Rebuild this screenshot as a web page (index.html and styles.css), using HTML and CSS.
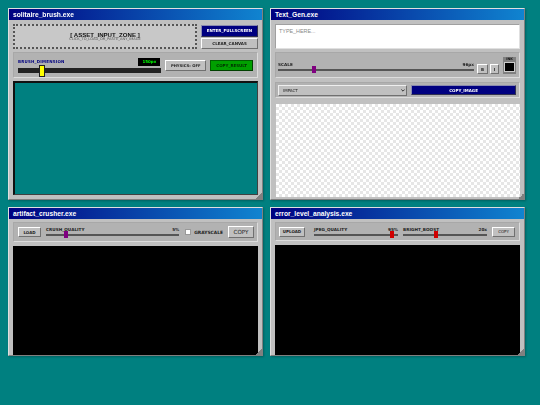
FILE: index.html
```html
<!DOCTYPE html>
<html lang="en">
<head>
<meta charset="utf-8">
<title>Desktop</title>
<link rel="stylesheet" href="styles.css">
</head>
<body>
<main class="desktop">
  <section class="window">
    <header class="titlebar">solitaire_brush.exe</header>
    <div class="body">
      <div class="top-row">
        <div class="dropzone">
          <div class="dz-title">[ ASSET_INPUT_ZONE ]</div>
          <div class="dz-sub">CLICK_TO_LOAD_OR_PASTE_ANY_IMAGE</div>
        </div>
        <div class="side-btns">
          <button class="btn navy wide">ENTER_FULLSCREEN</button>
          <button class="btn wide">CLEAR_CANVAS</button>
        </div>
      </div>
      <div class="panel brush-panel">
        <div class="brush-slider">
          <div class="brush-head">
            <span class="brush-label">BRUSH_DIMENSION</span>
            <span class="lcd">150px</span>
          </div>
          <div class="fat-track"><span class="yellow-thumb"></span></div>
        </div>
        <button class="btn physics">PHYSICS: OFF</button>
        <button class="btn green">COPY_RESULT</button>
      </div>
      <div class="canvas teal"></div>
    </div>
    <span class="grip"></span>
  </section>

  <section class="window">
    <header class="titlebar">Text_Gen.exe</header>
    <div class="body">
      <textarea class="text-in" placeholder="TYPE_HERE..."></textarea>
      <div class="panel scale-panel">
        <div class="scale-main">
          <div class="row-head"><span>SCALE</span><span>96px</span></div>
          <div class="thin-track"><span class="thumb purple scale-thumb"></span></div>
        </div>
        <button class="btn mini">B</button>
        <button class="btn mini narrow">I</button>
        <div class="ink"><span class="ink-label">INK</span><span class="ink-swatch"></span></div>
      </div>
      <div class="panel font-panel">
        <div class="select-wrap">
          <select class="font-select"><option>IMPACT</option></select>
          <svg class="chevron" viewBox="0 0 6 4" aria-hidden="true"><path d="M0.5 0.5 L3 3 L5.5 0.5" fill="none" stroke="#111" stroke-width="1.2"/></svg>
        </div>
        <button class="btn navy copy-image">COPY_IMAGE</button>
      </div>
      <div class="canvas checker"></div>
    </div>
    <span class="grip"></span>
  </section>

  <section class="window low">
    <header class="titlebar">artifact_crusher.exe</header>
    <div class="body">
      <div class="panel tool-panel">
        <button class="btn load">LOAD</button>
        <div class="grow">
          <div class="row-head"><span>CRUSH_QUALITY</span><span>5%</span></div>
          <div class="thin-track"><span class="thumb purple crush-thumb"></span></div>
        </div>
        <label class="gray-label"><span class="check"></span>GRAYSCALE</label>
        <button class="btn copy">COPY</button>
      </div>
      <div class="canvas black"></div>
    </div>
    <span class="grip"></span>
  </section>

  <section class="window low">
    <header class="titlebar">error_level_analysis.exe</header>
    <div class="body">
      <div class="panel tool-panel ela">
        <button class="btn load">UPLOAD</button>
        <div class="grow first">
          <div class="row-head"><span>JPEG_QUALITY</span><span>95%</span></div>
          <div class="thin-track"><span class="thumb red jpeg-thumb"></span></div>
        </div>
        <div class="grow">
          <div class="row-head"><span>BRIGHT_BOOST</span><span>20x</span></div>
          <div class="thin-track"><span class="thumb red boost-thumb"></span></div>
        </div>
        <button class="btn copy">COPY</button>
      </div>
      <div class="canvas black"></div>
    </div>
    <span class="grip"></span>
  </section>
</main>
</body>
</html>
```
FILE: styles.css
```css
* { box-sizing: border-box; }
html, body { margin: 0; height: 100%; }
body {
  background: #008080;
  font-family: "Liberation Sans", Arial, sans-serif;
  overflow: hidden;
}
.desktop {
  display: grid;
  grid-template-columns: 255px 255px;
  grid-template-rows: 192px 149px;
  gap: 7px;
  padding: 8px;
  filter: blur(0.3px);
}
.window {
  position: relative;
  display: flex;
  flex-direction: column;
  background: #c0c0c0;
  border: 1px solid;
  border-color: #dfdfdf #808080 #808080 #dfdfdf;
  box-shadow: 1px 1px 2px rgba(0, 0, 0, 0.25);
  overflow: hidden;
}
.titlebar {
  height: 11px;
  flex: none;
  padding-left: 4px;
  font-family: "Liberation Sans", sans-serif;
  font-size: 6.7px;
  font-weight: 700;
  line-height: 11px;
  color: #fff;
  background: linear-gradient(90deg, #000080, #1084d0);
}
.body {
  flex: 1;
  min-height: 0;
  display: flex;
  flex-direction: column;
  gap: 3px;
  padding: 4px 4px 0 4px;
}
.low .body { padding-top: 3px; gap: 4px; }
.btn {
  margin: 0;
  padding: 0;
  font-family: "DejaVu Sans", sans-serif;
  font-size: 4px;
  font-weight: 700;
  color: #222;
  background: #c0c0c0;
  border: 1px solid;
  border-color: #fff #707070 #707070 #fff;
  white-space: nowrap;
}
.btn.navy { background: #000080; color: #fff; border-color: #8a8ab0 #303050 #303050 #8a8ab0; }
.btn.green { background: #00a000; color: #003000; border-color: #006000 #004000 #004000 #006000; }
.top-row { display: flex; gap: 4px; height: 25px; flex: none; }
.dropzone {
  width: 184px;
  border: 2px dotted #555;
  background: #c8c8c8;
  display: flex;
  flex-direction: column;
  align-items: center;
  justify-content: center;
}
.dz-title { font-family: "Liberation Sans", sans-serif; font-size: 6.1px; font-weight: 700; line-height: 5px; color: #111; }
.dz-sub { font-family: "DejaVu Sans", sans-serif; font-size: 3.6px; line-height: 4px; color: #555; }
.side-btns { flex: 1; display: flex; flex-direction: column; gap: 1px; padding-top: 1px; }
.side-btns .wide { flex: 1; }
.panel {
  flex: none;
  background: #b2b2b2;
  border: 1px solid;
  border-color: #a8a8a8 #dcdcdc #dcdcdc #a8a8a8;
}
.brush-panel { height: 26px; display: flex; align-items: center; gap: 4px; padding: 0 4px; }
.brush-slider { width: 144px; display: flex; flex-direction: column; gap: 2px; margin-top: 1px; }
.brush-head { display: flex; justify-content: space-between; align-items: center; padding-right: 1px; }
.brush-label { font-family: "DejaVu Sans", sans-serif; font-size: 4px; font-weight: 700; color: #000080; letter-spacing: .2px; }
.lcd { width: 22px; height: 8px; background: #000; color: #0f0; font-family: "DejaVu Sans", sans-serif; font-size: 4px; font-weight: 700; line-height: 8px; text-align: center; }
.fat-track { position: relative; height: 5px; background: #222; margin-bottom: 1px; }
.yellow-thumb { position: absolute; left: 21px; top: -3px; width: 6px; height: 12px; background: #ff0; border: 1px solid #222; }
.physics { width: 41px; height: 11px; margin-top: 1px; font-size: 3.8px; }
.brush-panel .green { width: 43px; height: 11px; margin-top: 1px; }
.canvas { flex: 1; min-height: 0; }
.teal { background: #008080; border: 1px solid; border-color: #111 #404040 #404040 #111; border-top-width: 2px; border-left-width: 2px; margin-bottom: 4px; }
.black { background: #000; }
.checker {
  background-color: #fff;
  background-image: conic-gradient(#e6e6e6 25%, #fff 0 50%, #e6e6e6 0 75%, #fff 0);
  background-size: 6px 6px;
  margin: 3px 0 2px 1px;
}
.text-in {
  display: block;
  flex: none;
  width: 100%;
  height: 25px;
  margin: 0;
  padding: 3px 3px;
  background: #fff;
  border: 1px solid;
  border-color: #a0a0a0 #e0e0e0 #e0e0e0 #a0a0a0;
  resize: none;
  font-family: "Liberation Sans", sans-serif;
  font-size: 5.4px;
}
.text-in::placeholder { color: #888; }
.scale-panel { height: 26px; display: flex; align-items: center; gap: 2px; padding: 0 2px; }
.scale-main { flex: 1; margin-right: 1px; margin-top: 2px; }
.row-head { display: flex; justify-content: space-between; font-family: "DejaVu Sans", sans-serif; font-size: 4.2px; font-weight: 700; color: #222; line-height: 5px; }
.thin-track { position: relative; height: 2px; background: #555; margin-top: 2px; }
.thumb { position: absolute; top: -3px; width: 4px; height: 7px; }
.purple { background: #800080; }
.red { background: #d00000; }
.scale-thumb { left: 34px; }
.mini { width: 11px; height: 10px; margin-top: 8px; }
.mini.narrow { width: 9px; }
.ink { width: 13px; height: 17px; background: #808080; display: flex; flex-direction: column; align-items: center; margin-left: 2px; margin-right: 1px; }
.ink-label { font-family: "DejaVu Sans", sans-serif; font-size: 3.4px; font-weight: 700; line-height: 5px; color: #111; }
.ink-swatch { width: 11px; height: 10px; background: #000; border: 1px solid #ccc; }
.font-panel { height: 16px; display: flex; align-items: center; gap: 4px; padding: 0 2px; margin-top: 1px; }
.select-wrap { position: relative; width: 129px; height: 11px; flex: none; }
.font-select {
  appearance: none;
  display: block;
  width: 100%;
  height: 100%;
  margin: 0;
  padding: 0 0 0 4px;
  font-family: "DejaVu Sans", sans-serif;
  font-size: 4px;
  background: #c0c0c0;
  border: 1px solid;
  border-color: #eee #707070 #707070 #eee;
  color: #222;
}
.chevron { position: absolute; right: 2px; top: 4px; width: 4px; height: 3px; }
.copy-image { flex: 1; height: 10px; margin-right: 1px; }
.tool-panel { height: 20px; display: flex; align-items: center; gap: 5px; padding: 0 3px 0 4px; }
.ela { height: 19px; padding-left: 3px; padding-right: 4px; }
.load { width: 23px; height: 10px; }
.grow { flex: 1; min-width: 0; margin-top: -1px; }
.gray-label { display: flex; align-items: center; gap: 3px; margin-left: 1px; font-family: "DejaVu Sans", sans-serif; font-size: 4.4px; font-weight: 700; color: #222; }
.check { width: 6px; height: 6px; background: #fff; border: 1px solid #999; }
.copy { width: 26px; height: 12px; font-size: 5.6px; font-weight: 400; }
.ela .load { width: 26px; }
.ela .first { margin-left: 4px; }
.ela .copy { width: 23px; height: 10px; font-size: 4px; }
.crush-thumb { left: 18px; }
.jpeg-thumb { left: 76px; }
.boost-thumb { left: 31px; }
.grip {
  position: absolute;
  right: 0;
  bottom: 0;
  width: 6px;
  height: 6px;
  background: linear-gradient(135deg, transparent 50%, #808080 50%);
}
```
